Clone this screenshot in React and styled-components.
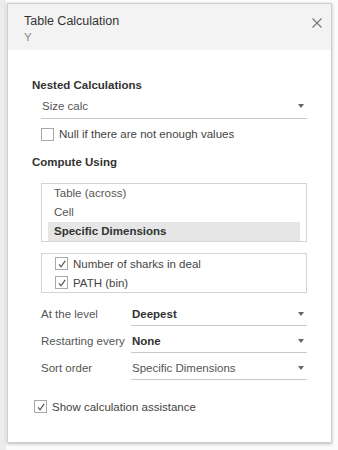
import styled, { createGlobalStyle } from 'styled-components'

const Global = createGlobalStyle`
    html, body {
        margin: 0;
        padding: 0;
        background: #fbfbfb;
    }
    body {
        font-family: "Liberation Sans", Arial, sans-serif;
        color: #333;
    }
`

const Page = styled.div`
    width: 338px;
    height: 450px;
    box-sizing: border-box;
    padding: 3px 6px 0 7px;
    background: linear-gradient(to right, #ececec 0, #ececec 6px, #fbfbfb 6px);
`

const Dialog = styled.div`
    width: 325px;
    height: 440px;
    box-sizing: border-box;
    background: #fff;
    border: 1px solid #cfcfcf;
    box-shadow: 0 1px 3px rgba(0, 0, 0, 0.25);
    display: flex;
    flex-direction: column;
`

const Header = styled.div`
    background: #f3f3f3;
    height: 46px;
    box-sizing: border-box;
    padding: 9px 8px 0 16px;
    display: flex;
    justify-content: space-between;
    align-items: flex-start;
    flex-shrink: 0;
`

const Title = styled.div`
    font-size: 12.5px;
    color: #333;
    line-height: 16px;

    .sub {
        font-size: 11.5px;
        color: #888;
        line-height: 16px;
    }
`

const Close = styled.button`
    border: none;
    background: none;
    padding: 0;
    margin-top: 4px;
    width: 12px;
    height: 12px;
    cursor: pointer;
    display: flex;
`

const Body = styled.div`
    padding: 27px 24px 0 24px;
    display: flex;
    flex-direction: column;
`

const SectionTitle = styled.div`
    font-size: 11.5px;
    font-weight: bold;
    color: #333;
    line-height: 16px;
    margin-top: ${(p) => p.top || 0}px;
    margin-bottom: ${(p) => p.gap || 0}px;
`

const Indent = styled.div`
    padding-left: 9px;
    display: flex;
    flex-direction: column;
`

const Select = styled.div`
    height: ${(p) => p.h || 22}px;
    flex-shrink: 0;
    box-sizing: border-box;
    border-bottom: 1px solid #c8c8c8;
    display: flex;
    align-items: center;
    justify-content: space-between;
    padding: 0 3px 2px 1px;
    font-size: 11.5px;
    font-weight: ${(p) => (p.bold ? 'bold' : 'normal')};
    color: ${(p) => (p.bold ? '#333' : '#555')};
`

const Caret = styled.span`
    width: 0;
    height: 0;
    border-left: 3px solid transparent;
    border-right: 3px solid transparent;
    border-top: 4px solid #666;
`

const CheckRow = styled.label`
    display: flex;
    align-items: center;
    gap: 5px;
    font-size: 11.5px;
    color: #444;
    height: ${(p) => p.h || 19}px;
    flex-shrink: 0;
`

const Box = styled.span`
    width: 13px;
    height: 13px;
    box-sizing: border-box;
    border: 1px solid #a8a8a8;
    background: #fff;
    display: flex;
    align-items: center;
    justify-content: center;
    flex-shrink: 0;
`

const List = styled.div`
    border: 1px solid #d4d4d4;
    padding: 0 6px;
    display: flex;
    flex-direction: column;
    margin-top: ${(p) => p.top || 0}px;
`

const ListItem = styled.div`
    height: 19px;
    line-height: 19px;
    padding-left: 6px;
    font-size: 11.5px;
    color: ${(p) => (p.selected ? '#333' : '#555')};
    font-weight: ${(p) => (p.selected ? 'bold' : 'normal')};
    background: ${(p) => (p.selected ? '#e6e6e6' : 'transparent')};
`

const CheckList = styled.div`
    border: 1px solid #d4d4d4;
    padding: 0 13px;
    margin-top: 11px;
    display: flex;
    flex-direction: column;
`

const FieldGrid = styled.div`
    display: grid;
    grid-template-columns: 90px 1fr;
    row-gap: 5px;
    margin-top: 11px;
    align-items: center;
`

const FieldLabel = styled.div`
    font-size: 11.5px;
    color: #555;
    padding-bottom: 2px;
`

const Footer = styled.div`
    margin-top: 17px;
    padding-left: 2px;
`

const Check = ({ checked }) => (
    <Box>
        {checked && (
            <svg width="10" height="10" viewBox="0 0 10 10">
                <path d="M2 5.4 L4 7.8 L8.2 1.8" fill="none" stroke="#555" strokeWidth="1.2" />
            </svg>
        )}
    </Box>
)

const App = () => {
    return (
        <Page>
            <Global />
            <Dialog>
                <Header>
                    <Title>
                        Table Calculation
                        <div className="sub">Y</div>
                    </Title>
                    <Close aria-label="close">
                        <svg width="12" height="12" viewBox="0 0 12 12">
                            <path d="M1.5 1.5 L10.5 10.5 M10.5 1.5 L1.5 10.5" stroke="#777" strokeWidth="1.2" />
                        </svg>
                    </Close>
                </Header>
                <Body>
                    <SectionTitle gap={3}>Nested Calculations</SectionTitle>
                    <Indent>
                        <Select h={23}>
                            Size calc
                            <Caret />
                        </Select>
                        <CheckRow h={30}>
                            <Check />
                            Null if there are not enough values
                        </CheckRow>
                    </Indent>
                    <SectionTitle top={5}>Compute Using</SectionTitle>
                    <Indent>
                        <List top={13}>
                            <ListItem>Table (across)</ListItem>
                            <ListItem>Cell</ListItem>
                            <ListItem selected>Specific Dimensions</ListItem>
                        </List>
                        <CheckList>
                            <CheckRow>
                                <Check checked />
                                Number of sharks in deal
                            </CheckRow>
                            <CheckRow>
                                <Check checked />
                                PATH (bin)
                            </CheckRow>
                        </CheckList>
                        <FieldGrid>
                            <FieldLabel>At the level</FieldLabel>
                            <Select bold>
                                Deepest
                                <Caret />
                            </Select>
                            <FieldLabel>Restarting every</FieldLabel>
                            <Select bold>
                                None
                                <Caret />
                            </Select>
                            <FieldLabel>Sort order</FieldLabel>
                            <Select>
                                Specific Dimensions
                                <Caret />
                            </Select>
                        </FieldGrid>
                    </Indent>
                    <Footer>
                        <CheckRow>
                            <Check checked />
                            Show calculation assistance
                        </CheckRow>
                    </Footer>
                </Body>
            </Dialog>
        </Page>
    )
}

export default App
